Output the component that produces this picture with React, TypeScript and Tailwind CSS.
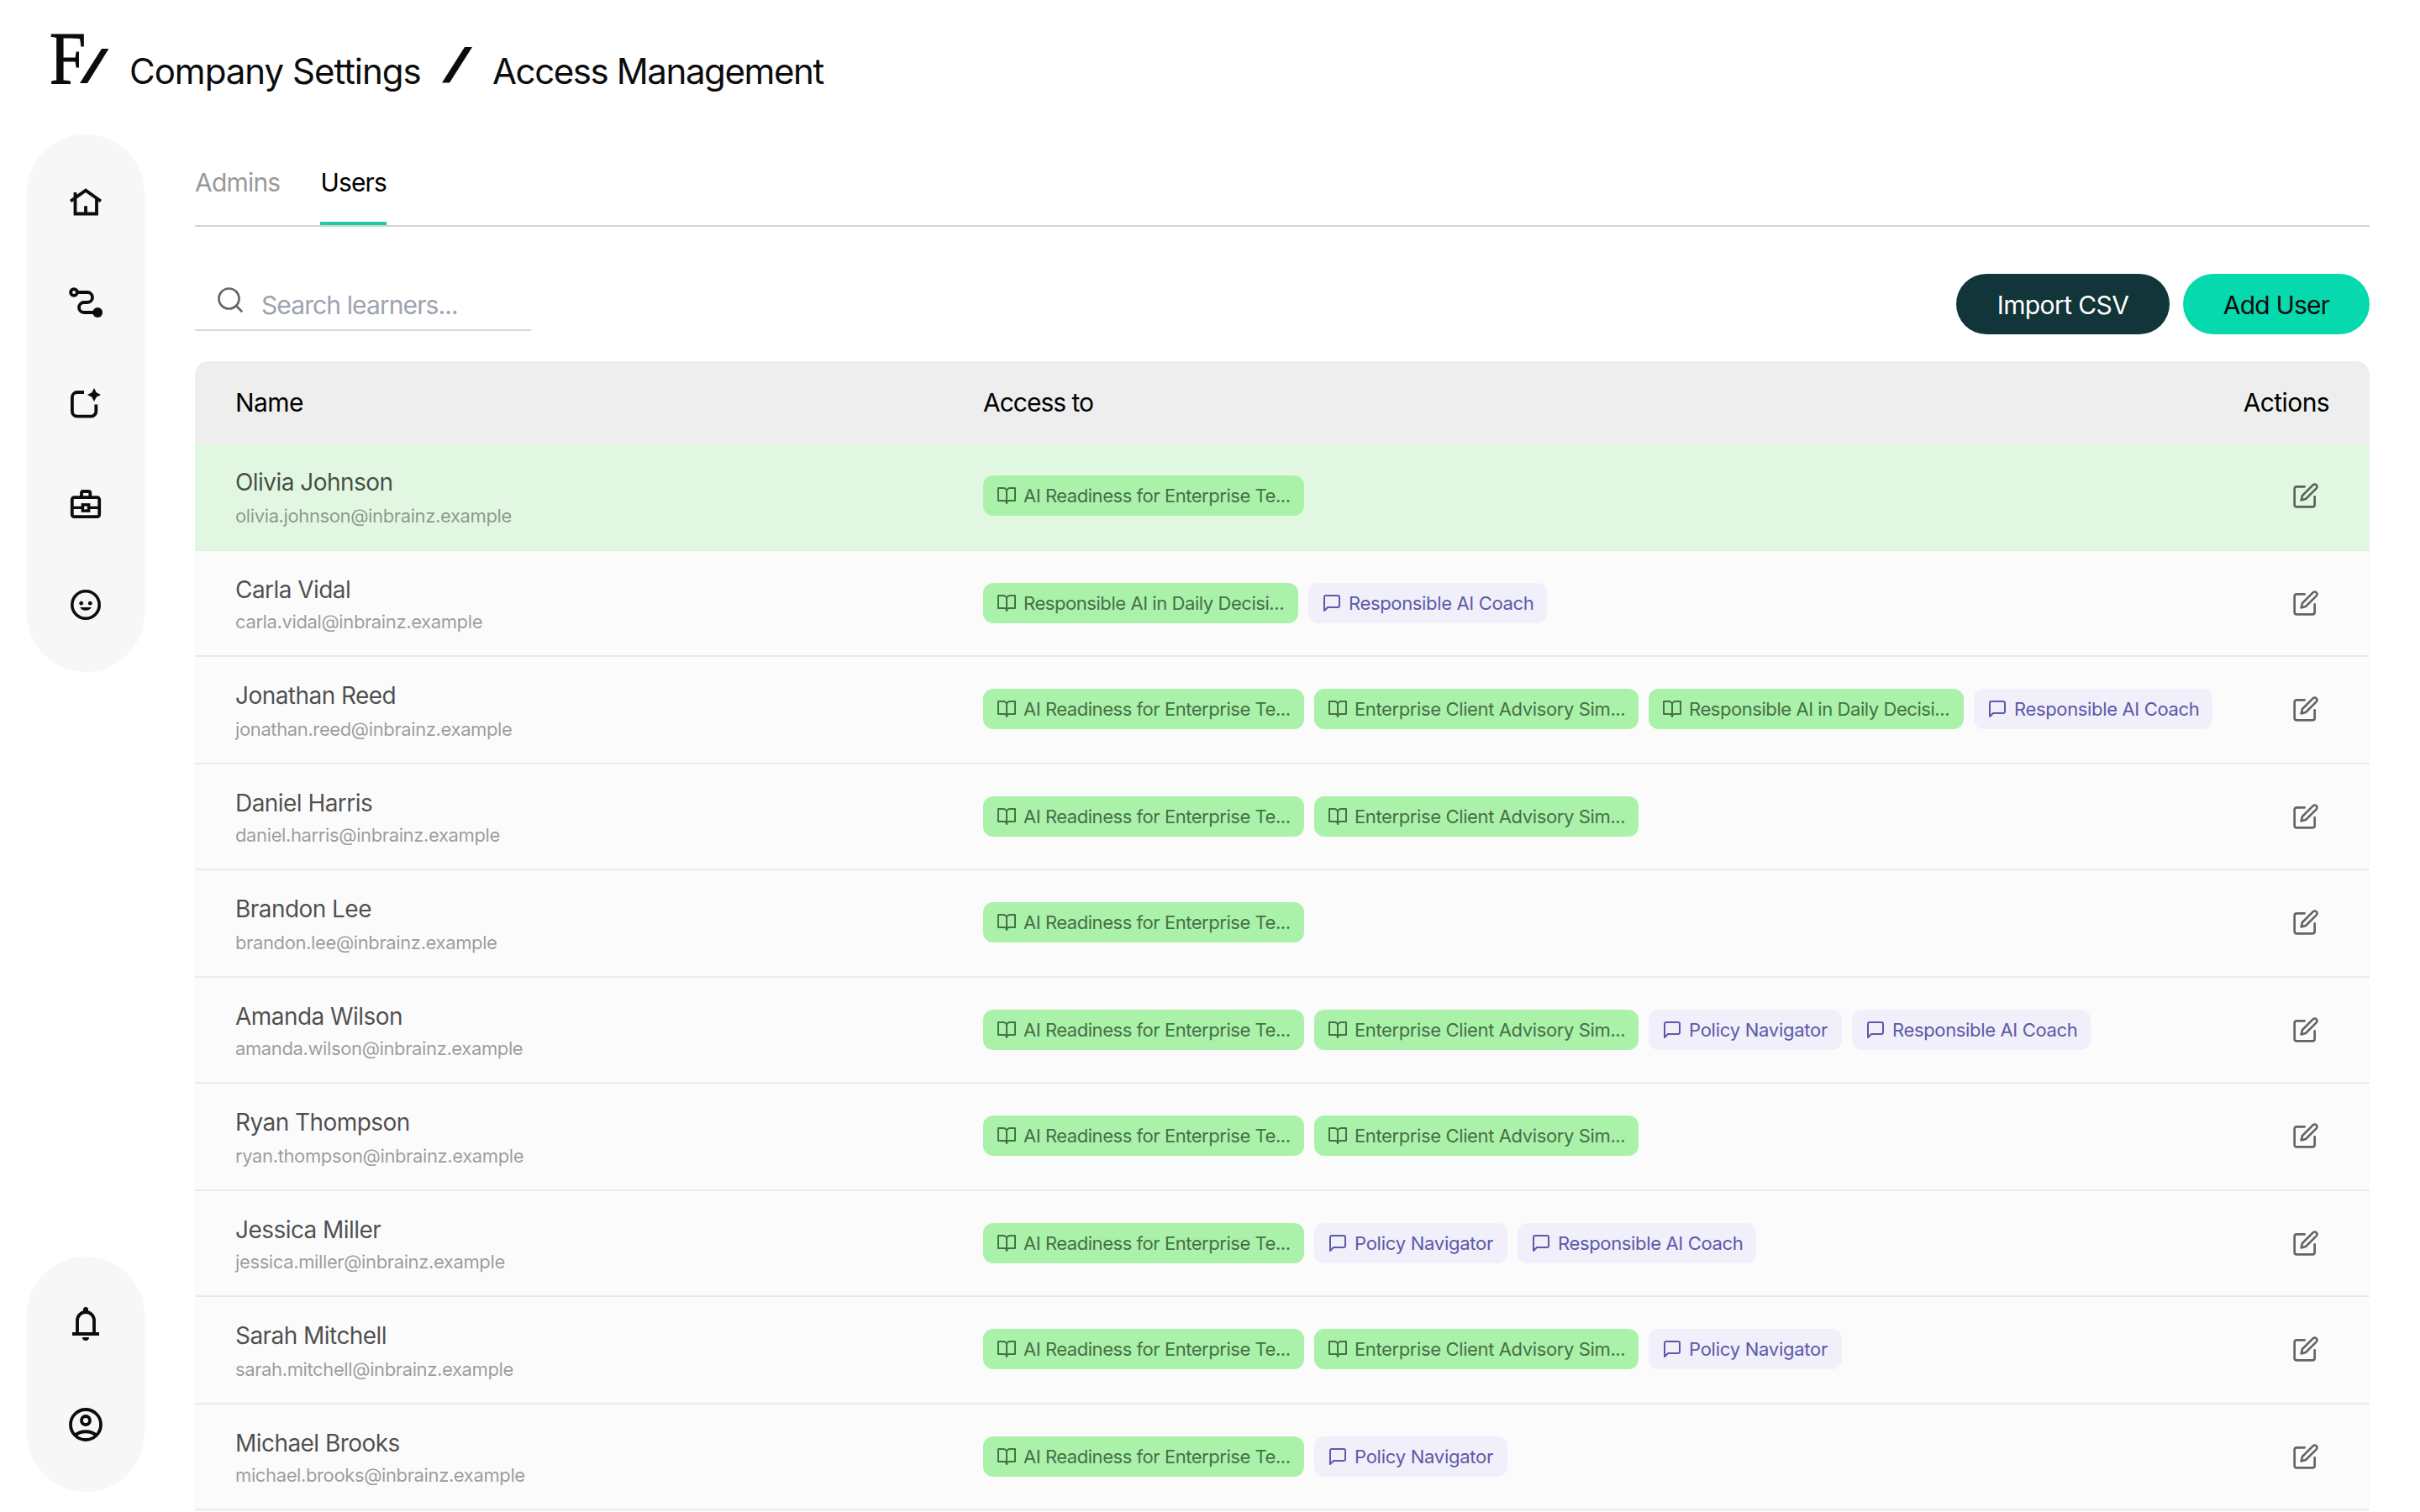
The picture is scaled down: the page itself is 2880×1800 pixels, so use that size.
import type { ReactNode } from 'react'
import { Search } from 'lucide-react'
import { FiBookOpen, FiEdit, FiMessageSquare } from 'react-icons/fi'

type Access = { kind: 'course' | 'coach'; label: string; size: string }

const readiness: Access = { kind: 'course', label: 'AI Readiness for Enterprise Te...', size: 'w-[382px] tracking-[-0.46px]' }
const advisory: Access = { kind: 'course', label: 'Enterprise Client Advisory Sim...', size: 'w-[386px] tracking-[-0.38px]' }
const decisions: Access = { kind: 'course', label: 'Responsible AI in Daily Decisi...', size: 'w-[375px] tracking-[-0.44px]' }
const coach: Access = { kind: 'coach', label: 'Responsible AI Coach', size: 'w-[284px] tracking-[-0.35px]' }
const navigator: Access = { kind: 'coach', label: 'Policy Navigator', size: 'w-[230px] tracking-[-0.25px]' }

const users = [
    { name: 'Olivia Johnson', email: 'olivia.johnson@inbrainz.example', access: [readiness] },
    { name: 'Carla Vidal', email: 'carla.vidal@inbrainz.example', access: [decisions, coach] },
    { name: 'Jonathan Reed', email: 'jonathan.reed@inbrainz.example', access: [readiness, advisory, decisions, coach] },
    { name: 'Daniel Harris', email: 'daniel.harris@inbrainz.example', access: [readiness, advisory] },
    { name: 'Brandon Lee', email: 'brandon.lee@inbrainz.example', access: [readiness] },
    { name: 'Amanda Wilson', email: 'amanda.wilson@inbrainz.example', access: [readiness, advisory, navigator, coach] },
    { name: 'Ryan Thompson', email: 'ryan.thompson@inbrainz.example', access: [readiness, advisory] },
    { name: 'Jessica Miller', email: 'jessica.miller@inbrainz.example', access: [readiness, navigator, coach] },
    { name: 'Sarah Mitchell', email: 'sarah.mitchell@inbrainz.example', access: [readiness, advisory, navigator] },
    { name: 'Michael Brooks', email: 'michael.brooks@inbrainz.example', access: [readiness, navigator] },
]

function NavIcon({ children }: { children: ReactNode }) {
    return (
        <button className="flex size-20 items-center justify-center">
            <svg viewBox="0 0 48 48" className="size-12" fill="none" stroke="currentColor" strokeWidth="3.8">
                {children}
            </svg>
        </button>
    )
}

function Tag({ kind, label, size }: Access) {
    const colors = kind === 'course' ? 'bg-[#aaf2aa] text-[#467046]' : 'bg-[#f0effa] text-[#5d59a8]'
    const Icon = kind === 'course' ? FiBookOpen : FiMessageSquare
    return (
        <span className={`flex h-12 shrink-0 items-center gap-2 rounded-xl pl-4 text-[22px] whitespace-nowrap ${colors} ${size}`}>
            <Icon className="size-6 shrink-0" />
            <span>{label}</span>
        </span>
    )
}

export default function App() {
    return (
        <div className="flex h-[1800px] w-[2880px] flex-col overflow-hidden bg-white font-['Inter',sans-serif] text-[#0c0c0c]">
            <header className="flex h-40 shrink-0 items-start pl-[58px] whitespace-nowrap">
                <svg viewBox="0 0 74 110" className="mt-2.5 h-[110px] w-[74px]">
                    <text
                        transform="translate(1 88.5) scale(0.87 1)"
                        fontFamily="Liberation Serif"
                        fontSize="89"
                        fill="currentColor"
                        stroke="currentColor"
                        strokeWidth="1.2"
                    >
                        F
                    </text>
                    <path d="M37 89 L63 48 H71.500 L46 89 Z" fill="currentColor" />
                </svg>
                <h1 className="mt-[60px] ml-[22px] w-[348px] text-[42px] leading-[50px] tracking-[-1px]">Company Settings</h1>
                <svg viewBox="0 0 36 44" className="mt-[55px] ml-[24px] h-11 w-9">
                    <path d="M0 43.500 L27 1 H36 L9 43.500 Z" fill="currentColor" />
                </svg>
                <h2 className="mt-[60px] ml-[24px] text-[42px] leading-[50px] tracking-[-1.4px]">Access Management</h2>
            </header>

            <div className="flex min-h-0 flex-1">
                <aside className="flex w-[232px] shrink-0 flex-col justify-between pb-6 pl-8">
                    <nav className="flex w-[140px] flex-col items-center gap-10 rounded-[70px] bg-[#f7f7f7] py-10">
                        <NavIcon>
                            <path d="M6 23.500 L24 10.700 L42 23.500 M11.500 13 V38.500 H37 V20 M24 38.500 V29.300" />
                        </NavIcon>
                        <NavIcon>
                            <circle cx="10" cy="12" r="3.9" />
                            <path d="M14 12 H26 a6 6 0 0 1 0 12 H22 a6 6 0 0 0 0 12 H36" />
                            <circle cx="38.2" cy="36" r="5.9" fill="currentColor" stroke="none" />
                        </NavIcon>
                        <NavIcon>
                            <path d="M22 11 H13.900 a6 6 0 0 0 -6 6 V33.700 a6 6 0 0 0 6 6 H30.300 a6 6 0 0 0 6 -6 V25.500" />
                            <path d="M34 6 L36.700 11.300 L42 14 L36.700 16.700 L34 22 L31.300 16.700 L26 14 L31.300 11.300 Z" fill="currentColor" stroke="none" />
                        </NavIcon>
                        <NavIcon>
                            <rect x="7.800" y="16.200" width="32.400" height="23" rx="2.500" />
                            <path d="M19 16 V11 a2 2 0 0 1 2 -2 H27.300 a2 2 0 0 1 2 2 V16" />
                            <path d="M8 28.400 H20 M28 28.400 H40" strokeWidth="3.200" />
                            <rect x="20.400" y="24.900" width="7.200" height="7.200" strokeWidth="3.500" />
                        </NavIcon>
                        <NavIcon>
                            <circle cx="24" cy="24" r="16.200" strokeWidth="3.600" />
                            <circle cx="18.700" cy="22.200" r="2.400" fill="currentColor" stroke="none" />
                            <circle cx="29.300" cy="22.200" r="2.400" fill="currentColor" stroke="none" />
                            <path d="M17.200 27 H30.800 a7.200 5.500 0 0 1 -13.600 0 Z" fill="currentColor" stroke="none" />
                        </NavIcon>
                    </nav>
                    <nav className="flex w-[140px] flex-col items-center gap-10 rounded-[70px] bg-[#f7f7f7] py-10">
                        <NavIcon>
                            <path d="M14 36 V20 a10 10 0 0 1 20 0 V36 M8 36 H40" />
                            <path d="M21 10 V7 a3 3 0 0 1 6 0 V10 Z M20 40 H28 a4 4 0 0 1 -8 0 Z" fill="currentColor" stroke="none" />
                        </NavIcon>
                        <NavIcon>
                            <circle cx="24" cy="24" r="18" />
                            <circle cx="24" cy="19" r="5" />
                            <path d="M11.500 36.500 C18 30.800 30 30.800 36.500 36.500" />
                        </NavIcon>
                    </nav>
                </aside>

                <main className="w-[2588px] shrink-0">
                    <div className="flex h-[110px] gap-12 border-b-2 border-[#d4d4d4] text-[30px] leading-[38px] tracking-[-0.8px]">
                        <button className="flex pt-[38px] text-[#9a9a9a]">Admins</button>
                        <button className="flex border-b-4 border-[#1ccba3] pt-[38px] text-black">Users</button>
                    </div>

                    <div className="flex h-40 items-start justify-between">
                        <label className="mt-14 flex h-[68px] w-[400px] border-b-2 border-[#d8d8d8] pl-6">
                            <Search className="mt-[13px] size-9 text-[#666666]" strokeWidth={1.8} />
                            <input
                                className="mt-[17px] ml-[19px] h-10 w-[300px] text-[30px] tracking-[-0.9px] outline-none placeholder:text-[#9ca3af]"
                                placeholder="Search learners..."
                            />
                        </label>
                        <div className="mt-14 flex gap-4 text-[30px]">
                            <button className="h-18 w-[254px] rounded-full bg-[#123539] pt-0.5 tracking-[-0.6px] text-white">Import CSV</button>
                            <button className="h-18 w-[222px] rounded-full bg-[#06d9ad] pt-0.5 tracking-[-0.8px]">Add User</button>
                        </div>
                    </div>

                    <section className="overflow-hidden rounded-t-2xl">
                        <div className="flex h-[98px] items-center bg-[#eeeeee] px-12 text-[30px] text-black">
                            <span className="w-[890px] tracking-[-0.6px]">Name</span>
                            <span className="flex-1 tracking-[-1px]">Access to</span>
                            <span className="tracking-[-0.6px]">Actions</span>
                        </div>
                        {users.map((user, i) => (
                            <div
                                key={user.email}
                                className={`flex border-b-2 px-12 ${i % 2 === 0 ? 'h-[128px]' : 'h-[126px]'} ${
                                    i === 0 ? 'border-[#e0f2e0] bg-[#e1f7e1]' : 'border-[#eaeaea] bg-[#fbfbfb]'
                                }`}
                            >
                                <div className={`flex w-[890px] flex-col pt-[26px] ${i % 2 === 0 ? 'gap-1' : 'gap-0.5'}`}>
                                    <span className="text-[28px] leading-10 tracking-[-0.55px] text-black/70">{user.name}</span>
                                    <span className="text-[22px] leading-8 tracking-[-0.38px] text-black/40">{user.email}</span>
                                </div>
                                <div className="flex flex-1 gap-3 pt-[38px]">
                                    {user.access.map((item) => (
                                        <Tag key={item.label} {...item} />
                                    ))}
                                </div>
                                <button className="mr-3 flex pt-[46px] text-black/60">
                                    <FiEdit className="size-8" />
                                </button>
                            </div>
                        ))}
                        <div className="h-2 bg-[#fbfbfb]" />
                    </section>
                </main>
            </div>
        </div>
    )
}
